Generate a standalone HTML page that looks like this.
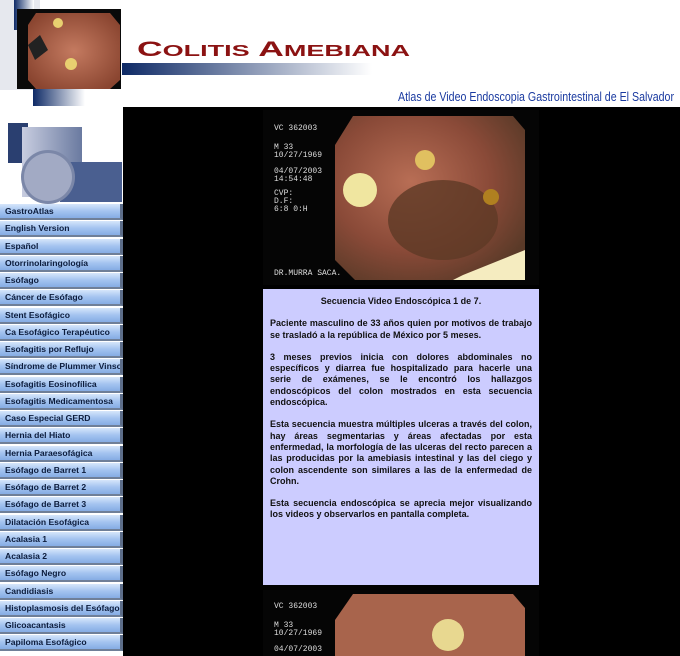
<!DOCTYPE html>
<html><head><meta charset="utf-8"><style>
*{margin:0;padding:0;box-sizing:border-box}
body{width:680px;height:656px;overflow:hidden;background:#fff;font-family:"Liberation Sans",Arial,sans-serif;position:relative}
.hdr{position:absolute;left:0;top:0;width:680px;height:107px;background:#fff}
.black{position:absolute;left:123px;top:107px;width:557px;height:549px;background:#000}
.side{position:absolute;left:0;top:107px;width:123px;height:549px;background:#fff}
.btn{position:absolute;left:0;width:123px;height:16px;background:linear-gradient(#d6e6fb,#a4c4f0 50%,#86ace4);border-right:3px solid #5d6e8a;border-bottom:2px solid #6f7f98;font-size:8.6px;font-weight:bold;color:#0c1c3c;padding-left:5px;line-height:14px;white-space:nowrap;overflow:hidden}
.box{position:absolute;left:263px;top:289px;width:276px;height:296px;background:#ccccff;padding:7px 7px;font-size:9px;font-weight:bold;color:#111;line-height:11.3px;text-align:justify}
.box p{margin-bottom:11px}
</style></head><body>
<div class="hdr">
<svg width="680" height="107" style="position:absolute;left:0;top:0">
<defs>
<linearGradient id="bar" x1="0" x2="1"><stop offset="0" stop-color="#0e2a66"/><stop offset="1" stop-color="#fff"/></linearGradient>
<linearGradient id="bar2" x1="0" x2="1"><stop offset="0" stop-color="#0e2a66"/><stop offset="1" stop-color="#fff"/></linearGradient>
<radialGradient id="endo" cx="0.5" cy="0.5" r="0.6"><stop offset="0" stop-color="#c47a60"/><stop offset="1" stop-color="#8a4530"/></radialGradient>
</defs>
<rect x="0" y="0" width="40" height="90" fill="#e6e8ee"/>
<rect x="14" y="0" width="20" height="30" fill="url(#bar2)"/>
<rect x="122" y="63" width="250" height="12" fill="url(#bar)"/>
<rect x="33" y="73" width="52" height="33" fill="url(#bar2)"/>
<rect x="17" y="9" width="104" height="80" fill="#0a0a0a"/>
<polygon points="36,13 110,13 120,25 120,80 110,89 36,89 28,80 28,25" fill="url(#endo)"/>
<circle cx="71" cy="64" r="6" fill="#e8d070"/><circle cx="58" cy="23" r="5" fill="#e8d070"/>
<polygon points="28,45 40,35 48,50 35,60" fill="#222"/>
<text x="137" y="56" font-family="Liberation Sans,sans-serif" font-weight="bold" font-size="21" fill="#8b1212" textLength="273" lengthAdjust="spacingAndGlyphs">C<tspan font-size="16">OLITIS</tspan> A<tspan font-size="16">MEBIANA</tspan></text>
<text x="674" y="101" text-anchor="end" font-family="Liberation Sans Narrow,Liberation Sans,sans-serif" font-size="12.5" fill="#1a3aa0" textLength="276" lengthAdjust="spacingAndGlyphs">Atlas de Video Endoscopia Gastrointestinal de El Salvador</text>
</svg>
</div>
<div class="black"></div>
<div class="side">
<svg width="123" height="97" style="position:absolute;left:0;top:0">
<defs><linearGradient id="g3" x1="0" x2="1"><stop offset="0" stop-color="#c8cde0"/><stop offset="1" stop-color="#6a7aa0"/></linearGradient></defs>
<rect x="8" y="16" width="20" height="40" fill="#2a3f70"/>
<rect x="22" y="20" width="60" height="70" fill="url(#g3)"/>
<rect x="60" y="55" width="62" height="40" fill="#4a5f90"/>
<circle cx="48" cy="70" r="27" fill="#7b87a8"/>
<circle cx="48" cy="70" r="24" fill="#a2aac4"/>
</svg>
</div>
<div id="btns"></div>
<svg width="276" height="175" style="position:absolute;left:263px;top:110px">
<rect width="276" height="175" fill="#050505"/>
<defs><radialGradient id="e2" cx="0.4" cy="0.4" r="0.7"><stop offset="0" stop-color="#b86e55"/><stop offset="0.6" stop-color="#8a4a38"/><stop offset="1" stop-color="#5a3a28"/></radialGradient></defs>
<polygon points="90,6 250,6 262,20 262,150 240,170 92,170 72,150 72,35" fill="url(#e2)"/>
<ellipse cx="180" cy="110" rx="55" ry="40" fill="#5e3a26" opacity="0.8"/>
<circle cx="97" cy="80" r="17" fill="#f0e6a0"/><circle cx="162" cy="50" r="10" fill="#e0c060"/><circle cx="228" cy="87" r="8" fill="#b08020"/>
<polygon points="200,165 262,140 262,170 190,170" fill="#f5ecc0"/>
<g font-family="Liberation Mono,monospace" font-size="8" fill="#ddd"><text x="11" y="20">VC 362003</text><text x="11" y="39">M 33</text><text x="11" y="47">10/27/1969</text><text x="11" y="63">04/07/2003</text><text x="11" y="71">14:54:48</text><text x="11" y="85">CVP:</text><text x="11" y="93">D.F:</text><text x="11" y="101">6:8 0:H</text><text x="11" y="165">DR.MURRA SACA.</text></g>
</svg>
<div class="box">
<p style="text-align:center">Secuencia Video Endoscópica 1 de 7.</p>
<p>Paciente masculino de 33 años quien por motivos de trabajo se trasladó a la república de México por 5 meses.</p>
<p>3 meses previos inicia con dolores abdominales no específicos y diarrea fue hospitalizado para hacerle una serie de exámenes, se le encontró los hallazgos endoscópicos del colon mostrados en esta secuencia endoscópica.</p>
<p>Esta secuencia muestra múltiples ulceras a través del colon, hay áreas segmentarias y áreas afectadas por esta enfermedad, la morfología de las ulceras del recto parecen a las producidas por la amebiasis intestinal y las del ciego y colon ascendente son similares a las de la enfermedad de Crohn.</p>
<p>Esta secuencia endoscópica se aprecia mejor visualizando los videos y observarlos en pantalla completa.</p>
</div>
<svg width="276" height="66" style="position:absolute;left:263px;top:590px">
<rect width="276" height="66" fill="#050505"/>
<polygon points="90,4 250,4 262,18 262,66 72,66 72,30" fill="#a8644c"/>
<circle cx="185" cy="45" r="16" fill="#e8d890"/>
<g font-family="Liberation Mono,monospace" font-size="8" fill="#ddd"><text x="11" y="18">VC 362003</text><text x="11" y="37">M 33</text><text x="11" y="45">10/27/1969</text><text x="11" y="61">04/07/2003</text></g>
</svg>
<script>
var n=["GastroAtlas","English Version","Español","Otorrinolaringología","Esófago","Cáncer de Esófago","Stent Esofágico","Ca Esofágico Terapéutico","Esofagitis por Reflujo","Síndrome de Plummer Vinson","Esofagitis Eosinofílica","Esofagitis Medicamentosa","Caso Especial GERD","Hernia del Hiato","Hernia Paraesofágica","Esófago de Barret 1","Esófago de Barret 2","Esófago de Barret 3","Dilatación Esofágica","Acalasia 1","Acalasia 2","Esófago Negro","Candidiasis","Histoplasmosis del Esófago","Glicoacantasis","Papiloma Esofágico"];
var h="";for(var i=0;i<n.length;i++){h+='<div class="btn" style="top:'+(204+i*17.25).toFixed(1)+'px">'+n[i]+'</div>';}
document.getElementById("btns").innerHTML=h;
</script>
</body></html>
